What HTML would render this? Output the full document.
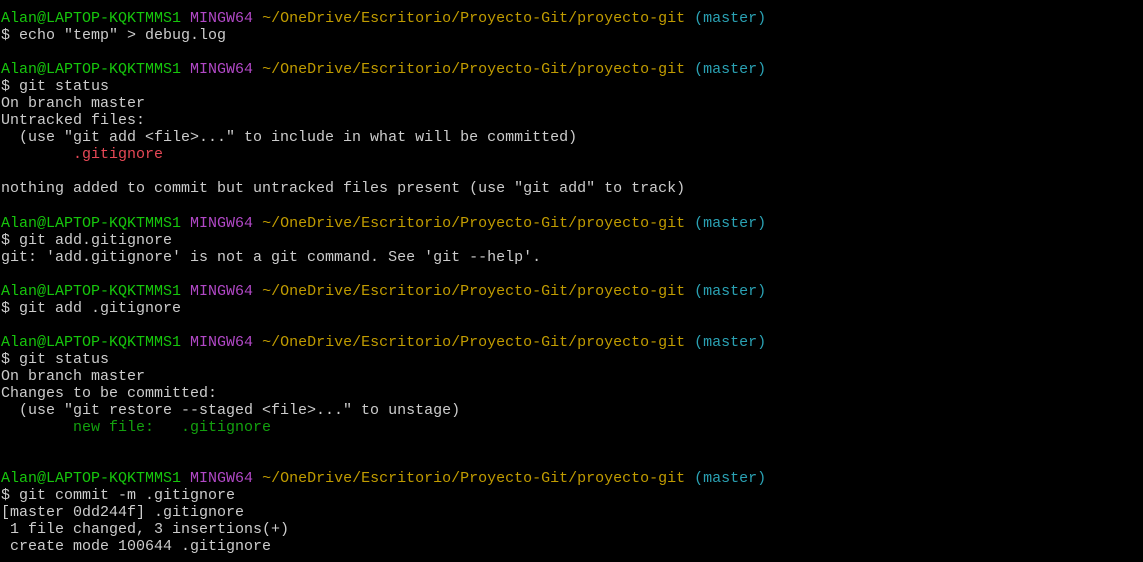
<html><head><style>
body{margin:0;background:#000;width:1143px;height:562px;overflow:hidden}
pre{margin:0;padding:10px 0 0 1px;font-family:"Liberation Mono",monospace;font-size:15px;line-height:17.05px;color:#cccccc;letter-spacing:0}
.g{color:#16c60c}.p{color:#b148c6}.y{color:#c19c00}.c{color:#2aa1b3}.r{color:#e74856}.n{color:#13a10e}
</style></head><body><pre><span class="g">Alan@LAPTOP-KQKTMMS1</span> <span class="p">MINGW64</span> <span class="y">~/OneDrive/Escritorio/Proyecto-Git/proyecto-git</span> <span class="c">(master)</span>
$ echo "temp" &gt; debug.log

<span class="g">Alan@LAPTOP-KQKTMMS1</span> <span class="p">MINGW64</span> <span class="y">~/OneDrive/Escritorio/Proyecto-Git/proyecto-git</span> <span class="c">(master)</span>
$ git status
On branch master
Untracked files:
  (use "git add &lt;file&gt;..." to include in what will be committed)
        <span class="r">.gitignore</span>

nothing added to commit but untracked files present (use "git add" to track)

<span class="g">Alan@LAPTOP-KQKTMMS1</span> <span class="p">MINGW64</span> <span class="y">~/OneDrive/Escritorio/Proyecto-Git/proyecto-git</span> <span class="c">(master)</span>
$ git add.gitignore
git: 'add.gitignore' is not a git command. See 'git --help'.

<span class="g">Alan@LAPTOP-KQKTMMS1</span> <span class="p">MINGW64</span> <span class="y">~/OneDrive/Escritorio/Proyecto-Git/proyecto-git</span> <span class="c">(master)</span>
$ git add .gitignore

<span class="g">Alan@LAPTOP-KQKTMMS1</span> <span class="p">MINGW64</span> <span class="y">~/OneDrive/Escritorio/Proyecto-Git/proyecto-git</span> <span class="c">(master)</span>
$ git status
On branch master
Changes to be committed:
  (use "git restore --staged &lt;file&gt;..." to unstage)
        <span class="n">new file:   .gitignore</span>


<span class="g">Alan@LAPTOP-KQKTMMS1</span> <span class="p">MINGW64</span> <span class="y">~/OneDrive/Escritorio/Proyecto-Git/proyecto-git</span> <span class="c">(master)</span>
$ git commit -m .gitignore
[master 0dd244f] .gitignore
 1 file changed, 3 insertions(+)
 create mode 100644 .gitignore
</pre></body></html>
